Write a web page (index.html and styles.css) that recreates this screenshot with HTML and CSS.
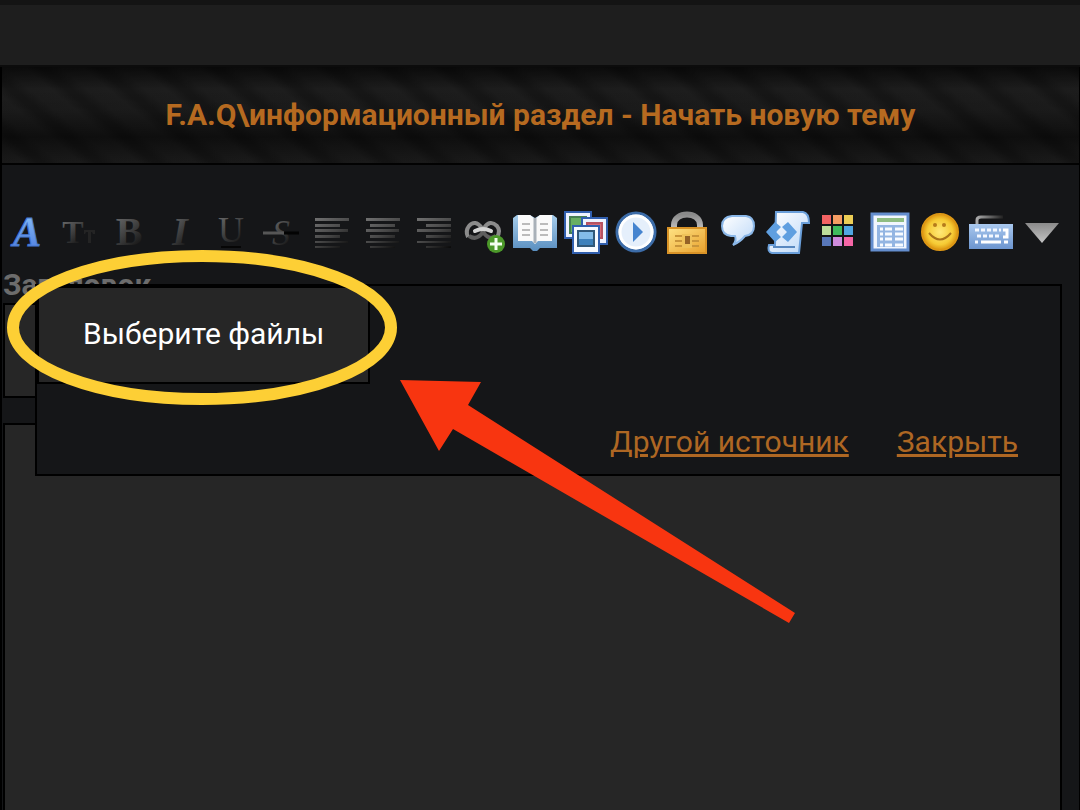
FILE: index.html
```html
<!DOCTYPE html>
<html lang="ru">
<head>
<meta charset="utf-8">
<meta name="viewport" content="width=device-width, initial-scale=1">
<title>Начать новую тему</title>
<link rel="stylesheet" href="styles.css">
</head>
<body>
<svg class="defs" aria-hidden="true">
  <defs>
    <linearGradient id="blue" x1="0" y1="0" x2="0" y2="1"><stop offset="0" stop-color="#8cc4fa"/><stop offset="1" stop-color="#4a78dc"/></linearGradient>
    <linearGradient id="gray" x1="0" y1="0" x2="0.5" y2="1"><stop offset="0" stop-color="#747474"/><stop offset="0.5" stop-color="#484848"/><stop offset="1" stop-color="#161616"/></linearGradient>
    <linearGradient id="lines" gradientUnits="userSpaceOnUse" x1="6" y1="8" x2="30" y2="44"><stop offset="0" stop-color="#707070"/><stop offset="0.5" stop-color="#474747"/><stop offset="1" stop-color="#0a0a0a"/></linearGradient>
    <linearGradient id="cover" x1="0" y1="0" x2="0" y2="1"><stop offset="0" stop-color="#a6cdeb"/><stop offset="1" stop-color="#5a8fc0"/></linearGradient>
    <linearGradient id="paper" x1="0" y1="0" x2="1" y2="1"><stop offset="0" stop-color="#ffffff"/><stop offset="1" stop-color="#bcd8f8"/></linearGradient>
    <linearGradient id="gold" x1="0" y1="0" x2="1" y2="1"><stop offset="0" stop-color="#ffe384"/><stop offset="1" stop-color="#e8a02c"/></linearGradient>
    <linearGradient id="metal" x1="0" y1="0" x2="0" y2="1"><stop offset="0" stop-color="#8a8a8a"/><stop offset="1" stop-color="#c4c4c4"/></linearGradient>
    <linearGradient id="key" x1="0" y1="0" x2="0" y2="1"><stop offset="0" stop-color="#a9c8ee"/><stop offset="1" stop-color="#6c95cf"/></linearGradient>
    <linearGradient id="cord" x1="0" y1="0" x2="1" y2="0"><stop offset="0" stop-color="#aaa"/><stop offset="1" stop-color="#222"/></linearGradient>
    <radialGradient id="face"><stop offset="0" stop-color="#ffe878"/><stop offset="0.7" stop-color="#f6cb35"/><stop offset="1" stop-color="#dc9410"/></radialGradient>
  </defs>
</svg>
<header class="topbar"></header>
<main class="panel">
  <h1 class="heading">F.A.Q\информационный раздел - Начать новую тему</h1>
  <div class="toolbar" role="toolbar" aria-label="Форматирование">
    <button class="tool" type="button" aria-label="Шрифт"><svg class="icon" viewBox="0 0 44 44"><text class="glyph glyph-font" x="21" y="36" fill="url(#blue)" stroke="#4678cf">A</text></svg></button>
    <button class="tool" type="button" aria-label="Размер"><svg class="icon" viewBox="0 0 44 44"><text class="glyph glyph-size" x="16" y="33" fill="url(#gray)">T</text><path d="M27 20h11v4h-2l-1-2h-1v11h-3V22h-2l-1 2h-1z" fill="#242424"/></svg></button>
    <button class="tool" type="button" aria-label="Жирный"><svg class="icon" viewBox="0 0 44 44"><text class="glyph glyph-bold" x="22" y="35" fill="url(#gray)">B</text></svg></button>
    <button class="tool" type="button" aria-label="Курсив"><svg class="icon" viewBox="0 0 44 44"><text class="glyph glyph-italic" x="22" y="35" fill="url(#gray)">I</text></svg></button>
    <button class="tool" type="button" aria-label="Подчёркнутый"><svg class="icon" viewBox="0 0 44 44"><text class="glyph" x="22" y="32" fill="url(#gray)">U</text><path d="M12 37h20" stroke="#060606" stroke-width="2"/></svg></button>
    <button class="tool" type="button" aria-label="Зачёркнутый"><svg class="icon" viewBox="0 0 44 44"><text class="glyph glyph-strike" x="22" y="35" fill="url(#gray)">S</text><path d="M4 23h21" stroke="#565656" stroke-width="3"/><path d="M25 23h15" stroke="#030303" stroke-width="3"/></svg></button>
    <button class="tool" type="button" aria-label="По левому краю"><svg class="icon" viewBox="0 0 44 44"><path fill="url(#lines)" d="M5 8h34v3H5zM5 14h25v3H5zM5 19h33v3H5zM5 25h25v3H5zM5 31h33v2H5zM5 36h25v2H5z"/></svg></button>
    <button class="tool" type="button" aria-label="По центру"><svg class="icon" viewBox="0 0 44 44"><path fill="url(#lines)" d="M5 8h34v3H5zM9 14h25v3H9zM5 19h33v3H5zM9 25h25v3H9zM5 31h33v2H5zM9 36h25v2H9z"/></svg></button>
    <button class="tool" type="button" aria-label="По правому краю"><svg class="icon" viewBox="0 0 44 44"><path fill="url(#lines)" d="M5 8h34v3H5zM14 14h25v3H14zM5 19h34v3H5zM14 25h25v3H14zM5 31h34v2H5zM14 36h25v2H14z"/></svg></button>
    <button class="tool" type="button" aria-label="Ссылка"><svg class="icon" viewBox="0 0 44 44"><g fill="none" stroke-width="4"><path d="M6 27Q3 21 7 16Q13 9 20 18M35 27Q39 21 35 16Q28 9 22 18" stroke="#8b8b8b"/><path d="M7 26Q15 31 21 22Q27 31 34 26" stroke="#5e5e5e"/><path d="M13 21Q21 17 29 21" stroke="#d4d4d4" stroke-linecap="round"/></g><circle cx="34" cy="34" r="9" fill="#4c992a"/><path d="M34 28v12M28 34h12" stroke="#f4fff0" stroke-width="3"/></svg></button>
    <button class="tool" type="button" aria-label="Спойлер"><svg class="icon" viewBox="0 0 44 44"><path fill="url(#cover)" d="M0 8L4 5H17L22 8L27 5H40L44 8V38H27L24 41H20L17 38H0z"/><path fill="#fafafa" d="M5 5H17L22 9L27 5H39V31H25L22 34L19 31H5z"/><path d="M22 8v25" stroke="#a9b1b9" stroke-width="3"/><path d="M9 14h8M9 20h8M9 25h8M27 14h8M27 20h8M27 25h8" stroke="#bbb" stroke-width="2"/></svg></button>
    <button class="tool" type="button" aria-label="Изображение"><svg class="icon" viewBox="0 0 44 44"><g stroke="#315fae" stroke-width="2"><path fill="#eef3ff" d="M1 2h26v26H1z"/><path fill="#68ae62" stroke="#478052" d="M6 7h16v16H6z"/><path fill="#eef3ff" d="M18 8h25v26H18z"/><path fill="#d66875" stroke="#b65262" d="M23 13h15v15H23z"/><path fill="#f7faff" d="M9 16h26v27H9z"/></g><path fill="#84bce8" stroke="#315879" stroke-width="2" d="M14 21h16v15H14z"/><path d="M15 29h14v6H15z" fill="#3d80bb"/></svg></button>
    <button class="tool" type="button" aria-label="Видео"><svg class="icon" viewBox="0 0 44 44"><circle cx="22" cy="22" r="19" fill="#e5effb" stroke="#3c6ca8" stroke-width="3"/><circle cx="22" cy="22" r="16" fill="none" stroke="#fff" stroke-width="3"/><path fill="#4584cf" d="M19 12L29 22L19 32z"/></svg></button>
    <button class="tool" type="button" aria-label="Скрытый текст"><svg class="icon" viewBox="0 0 44 44"><path d="M9 20V15C9 1 35 1 35 15V20" fill="none" stroke="url(#metal)" stroke-width="6"/><path fill="url(#gold)" stroke="#d99327" stroke-width="2" d="M3 18h38v25H3z"/><path d="M10 26h24M10 31h24M10 36h24" stroke="#c9953b" stroke-width="2"/><path d="M17 24h10v14H17z" fill="#efc25a"/><path d="M20 26h5v8h-5z" fill="#946127"/></svg></button>
    <button class="tool" type="button" aria-label="Цитата"><svg class="icon" viewBox="0 0 44 44"><path d="M16 6H30Q38 7 38 16Q38 25 29 26Q24 32 17 35Q21 31 19 26H15Q6 25 6 16Q6 7 16 6z" fill="url(#paper)" stroke="#8ab7e8" stroke-width="2"/></svg></button>
    <button class="tool" type="button" aria-label="Код"><svg class="icon" viewBox="0 0 44 44"><path d="M10 2H37Q43 3 43 13H36L33 43H6Q1 42 3 35H9z" fill="url(#paper)" stroke="#6a9fda" stroke-width="2"/><path d="M7 37h22" stroke="#5888c0" stroke-width="2"/><path fill="#5f9fe0" d="M0 22L9 12L15 17L10 22L15 27L9 32zM31 22L22 12L16 17L21 22L16 27L22 32z"/></svg></button>
    <button class="tool" type="button" aria-label="Цвет"><svg class="icon" viewBox="0 0 44 44"><path fill="#f36363" d="M5 5h9v9H5z"/><path fill="#f59d63" d="M16 5h9v9h-9z"/><path fill="#eccd55" d="M27 5h9v9h-9z"/><path fill="#bddd9b" d="M5 16h9v9H5z"/><path fill="#40bb5d" d="M16 16h9v9h-9z"/><path fill="#50a6e2" d="M27 16h9v9h-9z"/><path fill="#5877b9" d="M5 27h9v9H5z"/><path fill="#cf8bdc" d="M16 27h9v9h-9z"/><path fill="#f566a6" d="M27 27h9v9h-9z"/></svg></button>
    <button class="tool" type="button" aria-label="Таблица"><svg class="icon" viewBox="0 0 44 44"><path fill="#f1f6fe" stroke="#648ece" stroke-width="3" d="M4 4h36v36H4z"/><path fill="#8fbd83" d="M9 8h27v4H9z"/><path fill="#93b5e2" d="M9 15h27v22H9z"/><path d="M12 19h3M17 19h7M27 19h8M12 24h3M17 24h7M27 24h8M12 29h3M17 29h7M27 29h8M12 35h3M17 35h7M27 35h8" stroke="#f8fbff" stroke-width="3"/></svg></button>
    <button class="tool" type="button" aria-label="Смайлы"><svg class="icon" viewBox="0 0 44 44"><circle cx="22" cy="22" r="18" fill="url(#face)" stroke="#dc9715" stroke-width="2"/><circle cx="17" cy="15" r="2" fill="#b57b1c"/><circle cx="26" cy="15" r="2" fill="#b57b1c"/><path d="M11 23Q22 36 33 23" fill="none" stroke="#a9731b" stroke-width="2"/></svg></button>
    <button class="tool" type="button" aria-label="Клавиатура"><svg class="icon" viewBox="0 0 44 44"><path d="M8 15V10Q8 7 12 7H34" fill="none" stroke="url(#cord)" stroke-width="3"/><path fill="url(#key)" d="M0 14h44v25H0z"/><path d="M6 20h26M8 26h23M6 32h3" stroke="#f4f8ff" stroke-width="3" stroke-dasharray="4 2"/><path d="M34 20h4v7h-4M12 32h20M35 32h4" stroke="#fff" stroke-width="3" fill="none"/></svg></button>
    <button class="tool" type="button" aria-label="Ещё"><svg class="icon" viewBox="0 0 44 44"><path fill="url(#metal)" d="M5 13h34L22 33z"/></svg></button>
  </div>
  <form class="form">
    <label class="label" for="title">Заголовок</label>
    <input class="field title-field" id="title" type="text">
    <textarea class="field message" aria-label="Сообщение"></textarea>
    <div class="popup">
      <button class="choose" type="button">Выберите файлы</button>
      <nav class="links">
        <a class="link" href="#source">Другой источник</a>
        <a class="link" href="#close">Закрыть</a>
      </nav>
    </div>
  </form>
</main>
<svg class="marks" viewBox="0 0 800 630" aria-hidden="true">
  <ellipse cx="202" cy="327.500" rx="189" ry="71.500" fill="none" stroke="#fdcf35" stroke-width="12"/>
  <path d="M400 380L481 382L468 405L795 613L789 623L453 429L439 451z" fill="#f83510"/>
</svg>
</body>
</html>
```

FILE: styles.css
```css
* {
  box-sizing: border-box;
}

body {
  display: flex;
  flex-direction: column;
  min-height: 100vh;
  margin: 0;
  background: #151618;
  font-family: Roboto, "Liberation Sans", sans-serif;
  font-size: 30px;
}

.defs {
  position: absolute;
  width: 0;
  height: 0;
}

.topbar {
  height: 67px;
  border-top: 5px solid #141414;
  border-bottom: 2px solid #0c0c0c;
  background: #1e1e1e;
}

.panel {
  display: flex;
  flex: 1;
  flex-direction: column;
  border-right: 1px solid #000;
  border-left: 2px solid #000;
}

.heading {
  margin: 0;
  padding: 28px 16px;
  border-bottom: 2px solid #020202;
  background:
    linear-gradient(#000000a0 0, #00000000 22px, #00000018 44px, #00000080 70px, #00000018 96px),
    repeating-linear-gradient(40deg, #1c1c1c 0, #1d1d1d 14px, #161616 23px, #161616 28px, #1c1c1c 37px);
  color: #b66a20;
  font-size: 30px;
  font-weight: 700;
  line-height: 40px;
  text-align: center;
}

.toolbar {
  display: flex;
  justify-content: space-between;
  padding: 45px 15px 14px 4px;
}

.tool {
  width: 44px;
  height: 44px;
  padding: 0;
  border: 0;
  background: none;
}

.icon {
  display: block;
  width: 44px;
  height: 44px;
}

.glyph {
  font-family: "Liberation Serif", serif;
  font-size: 36px;
  text-anchor: middle;
}

.glyph-font {
  font-size: 42px;
  font-style: italic;
  font-weight: 700;
}

.glyph-size {
  font-size: 32px;
  font-weight: 700;
}

.glyph-bold {
  font-size: 40px;
  font-weight: 700;
}

.glyph-italic {
  font-size: 40px;
  font-style: italic;
  font-weight: 700;
}

.glyph-strike {
  font-style: italic;
}

.form {
  position: relative;
  display: flex;
  flex: 1;
  flex-direction: column;
  padding: 0 17px 0 1px;
}

.label {
  height: 35px;
  color: #6c6c6c;
  font-size: 30px;
  font-weight: 700;
  line-height: 34px;
}

.field {
  width: 100%;
  border: 2px solid #000;
  border-radius: 0;
  background: #262626;
  color: #fff;
  font: inherit;
}

.title-field {
  height: 95px;
  margin-bottom: 25px;
}

.message {
  display: block;
  flex: 1;
  border-bottom: 0;
  resize: none;
}

.popup {
  position: absolute;
  top: 16px;
  right: 17px;
  left: 33px;
  display: flex;
  flex-direction: column;
  align-items: flex-start;
  justify-content: space-between;
  height: 192px;
  border: 2px solid #000;
  background: #151618;
}

.choose {
  height: 98px;
  padding: 0 44px 3px;
  border: 2px solid #000;
  background: #262626;
  color: #fff;
  font: inherit;
}

.links {
  display: flex;
  gap: 48px;
  align-self: flex-end;
  padding: 0 42px 12px;
}

.link {
  color: #ae6723;
  line-height: 40px;
}

.marks {
  position: absolute;
  top: 0;
  left: 0;
  width: 800px;
  height: 630px;
  pointer-events: none;
}
```
